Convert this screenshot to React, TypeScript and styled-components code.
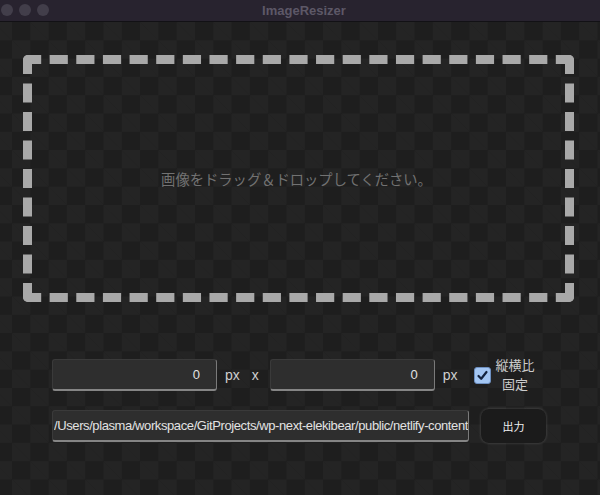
import React, { useState } from 'react';
import styled, { createGlobalStyle } from 'styled-components';

const GlobalStyle = createGlobalStyle`
  html, body {
    margin: 0;
    padding: 0;
    background: #1e1e1e;
  }
  body {
    font-family: "Liberation Sans", Roboto, "Noto Sans CJK JP", sans-serif;
  }
`;

const ZONE_W = 551;
const ZONE_H = 247;
const LINE = 9;

// dash pattern per side so that every side starts and ends with a dash (corners stay solid)
function sideDash(length: number, count: number, dash: number) {
  const gap = (length - count * dash) / (count - 1);
  return `${dash} ${gap}`;
}

function DashedFrame() {
  const h = LINE / 2;
  const horiz = sideDash(ZONE_W, 21, 18.2);
  const vert = sideDash(ZONE_H, 9, 19);
  return (
    <Frame width={ZONE_W} height={ZONE_H} viewBox={`0 0 ${ZONE_W} ${ZONE_H}`}>
      <g stroke="#a9a9a9" strokeWidth={LINE} fill="none">
        <path d={`M0 ${h} H${ZONE_W}`} strokeDasharray={horiz} />
        <path d={`M0 ${ZONE_H - h} H${ZONE_W}`} strokeDasharray={horiz} />
        <path d={`M${h} 0 V${ZONE_H}`} strokeDasharray={vert} />
        <path d={`M${ZONE_W - h} 0 V${ZONE_H}`} strokeDasharray={vert} />
      </g>
    </Frame>
  );
}

function App() {
  const [width, setWidth] = useState('0');
  const [height, setHeight] = useState('0');
  const [keepRatio, setKeepRatio] = useState(true);
  const [outDir, setOutDir] = useState(
    '/Users/plasma/workspace/GitProjects/wp-next-elekibear/public/netlify-content'
  );

  return (
    <Window>
      <GlobalStyle />
      <TitleBar>
        <Lights>
          <Light />
          <Light />
          <Light />
        </Lights>
        <Title>ImageResizer</Title>
      </TitleBar>
      <Content>
        <DropZone>
          <DashedFrame />
          <DropText>画像をドラッグ＆ドロップしてください。</DropText>
        </DropZone>
        <Controls>
          <Row>
            <SizeInput value={width} onChange={(e) => setWidth(e.target.value)} />
            <Unit>px</Unit>
            <Times>x</Times>
            <SizeInput value={height} onChange={(e) => setHeight(e.target.value)} />
            <Unit>px</Unit>
            <CheckLabel onClick={() => setKeepRatio(!keepRatio)}>
              <CheckBox $checked={keepRatio}>
                {keepRatio && (
                  <svg width="13" height="13" viewBox="0 0 13 13">
                    <path
                      d="M2.5 7 L5.2 9.8 L10.5 3"
                      fill="none"
                      stroke="#13233f"
                      strokeWidth="2.2"
                      strokeLinecap="round"
                      strokeLinejoin="round"
                    />
                  </svg>
                )}
              </CheckBox>
              <CheckText>
                縦横比
                <br />
                固定
              </CheckText>
            </CheckLabel>
          </Row>
          <Row>
            <PathInput value={outDir} onChange={(e) => setOutDir(e.target.value)} />
            <OutputButton>出力</OutputButton>
          </Row>
        </Controls>
      </Content>
    </Window>
  );
}

export default App;

const Window = styled.div`
  width: 600px;
  height: 495px;
  overflow: hidden;
  display: flex;
  flex-direction: column;
`;

const TitleBar = styled.div`
  height: 22px;
  flex-shrink: 0;
  position: relative;
  display: flex;
  align-items: center;
  justify-content: center;
  background: #28232f;
  border-bottom: 1px solid #121115;
  box-sizing: border-box;
`;

const Lights = styled.div`
  position: absolute;
  left: 1px;
  top: 4px;
  display: flex;
  gap: 6px;
`;

const Light = styled.span`
  width: 12px;
  height: 12px;
  border-radius: 50%;
  background: #423e4a;
`;

const Title = styled.div`
  font-size: 13px;
  font-weight: bold;
  color: #5d5867;
  padding-left: 8px;
`;

const Content = styled.div`
  flex: 1;
  padding: 33px 26px 0 23px;
  background-color: #1e1e1e;
  background-image:
    linear-gradient(45deg, #242424 25%, transparent 25%, transparent 75%, #242424 75%),
    linear-gradient(45deg, #242424 25%, transparent 25%, transparent 75%, #242424 75%);
  background-size: 36.6px 36.6px;
  background-position: 12px 0, 30.3px 18.3px;
`;

const DropZone = styled.div`
  position: relative;
  width: ${ZONE_W}px;
  height: ${ZONE_H}px;
  border-radius: 5px;
  overflow: hidden;
  display: flex;
  align-items: center;
  justify-content: center;
`;

const Frame = styled.svg`
  position: absolute;
  inset: 0;
  pointer-events: none;
`;

const DropText = styled.div`
  font-size: 14.3px;
  color: #727272;
  margin-left: -4px;
`;

const Controls = styled.div`
  margin-top: 54px;
  padding-left: 29px;
  display: flex;
  flex-direction: column;
  gap: 15px;
`;

const Row = styled.div`
  display: flex;
  align-items: center;
`;

const BaseInput = styled.input`
  height: 32px;
  box-sizing: border-box;
  background: #2e2e2e;
  color: #e2e2e2;
  font-family: "Liberation Sans", Roboto, sans-serif;
  font-size: 13px;
  border: 1px solid #3a3a3a;
  border-right-color: #7a7a7a;
  border-bottom: 2px solid #858585;
  border-radius: 3px;
  outline: none;
`;

const SizeInput = styled(BaseInput)`
  width: 165px;
  text-align: right;
  padding: 0 16px 0 4px;
`;

const PathInput = styled(BaseInput)`
  width: 417px;
  padding: 0 0 0 1px;
  letter-spacing: -0.4px;
`;

const Unit = styled.span`
  font-size: 14px;
  color: #cfcfcf;
  margin-left: 8px;
`;

const Times = styled.span`
  font-size: 14px;
  color: #cfcfcf;
  margin: 0 11px 0 12px;
`;

const CheckLabel = styled.label`
  display: flex;
  align-items: center;
  margin-left: 16px;
  cursor: pointer;
`;

const CheckBox = styled.span<{ $checked: boolean }>`
  width: 17px;
  height: 17px;
  box-sizing: border-box;
  border-radius: 3px;
  border: 1px solid #6d8fc0;
  background: ${(p) => (p.$checked ? '#a3c6f3' : '#2e2e2e')};
  display: flex;
  align-items: center;
  justify-content: center;
`;

const CheckText = styled.span`
  margin-left: 5px;
  font-size: 13px;
  line-height: 19px;
  color: #cccccc;
  text-align: center;
`;

const OutputButton = styled.button`
  margin-left: 12px;
  width: 65px;
  height: 34px;
  border: none;
  border-radius: 8px;
  background: #1b1b1b;
  color: #eeeeee;
  font-family: "Liberation Sans", "Noto Sans CJK JP", sans-serif;
  font-size: 11px;
  box-shadow: 0 0 3px rgba(255, 255, 255, 0.22);
  cursor: pointer;
`;
